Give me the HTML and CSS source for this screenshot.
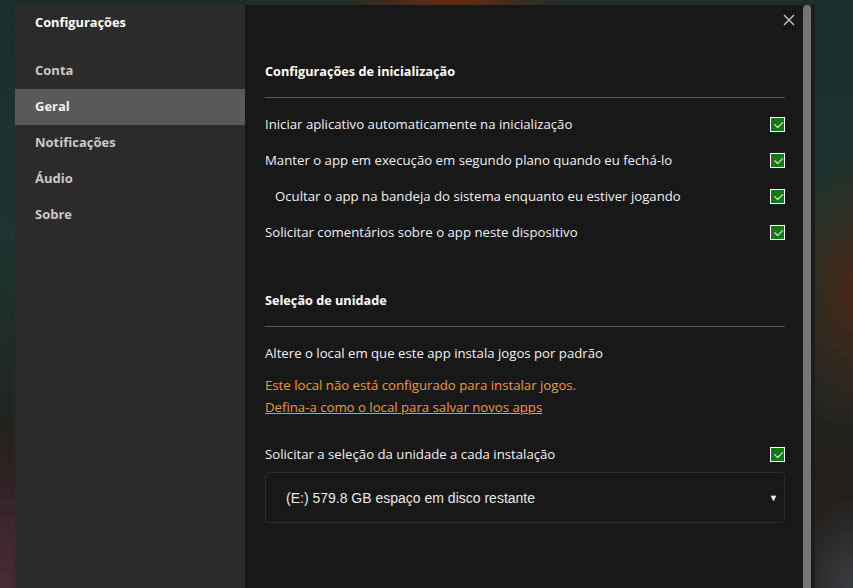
FILE: index.html
```html
<!DOCTYPE html>
<html lang="pt-BR">
<head>
  <meta charset="UTF-8">
  <title>Configurações</title>
  <link rel="stylesheet" href="styles.css">
</head>
<body>
  <div class="dialog">
    <aside class="sidebar">
      <h1 class="sidebar-title">Configurações</h1>
      <nav class="nav">
        <a class="nav-item">Conta</a>
        <a class="nav-item active">Geral</a>
        <a class="nav-item">Notificações</a>
        <a class="nav-item">Áudio</a>
        <a class="nav-item">Sobre</a>
      </nav>
    </aside>

    <main class="main">
      <button class="close" aria-label="Fechar">
        <svg width="12" height="12" viewBox="0 0 12 12"><path d="M1 1L11 11M11 1L1 11" stroke="#c8c8c8" stroke-width="1.4" fill="none"/></svg>
      </button>

      <div class="content">
        <section class="section">
          <h2 class="section-title">Configurações de inicialização</h2>
          <hr class="divider">
          <div class="row">
            <span>Iniciar aplicativo automaticamente na inicialização</span>
            <span class="check"></span>
          </div>
          <div class="row">
            <span>Manter o app em execução em segundo plano quando eu fechá-lo</span>
            <span class="check"></span>
          </div>
          <div class="row sub">
            <span>Ocultar o app na bandeja do sistema enquanto eu estiver jogando</span>
            <span class="check"></span>
          </div>
          <div class="row">
            <span>Solicitar comentários sobre o app neste dispositivo</span>
            <span class="check"></span>
          </div>
        </section>

        <section class="section second">
          <h2 class="section-title">Seleção de unidade</h2>
          <hr class="divider">
          <div class="row">
            <span>Altere o local em que este app instala jogos por padrão</span>
          </div>
          <p class="warning">Este local não está configurado para instalar jogos.<br>
            <a class="warning-link">Defina-a como o local para salvar novos apps</a></p>
          <div class="row">
            <span>Solicitar a seleção da unidade a cada instalação</span>
            <span class="check"></span>
          </div>
          <div class="select">
            <span>(E:) 579.8 GB espaço em disco restante</span>
            <span class="caret">▼</span>
          </div>
        </section>
      </div>

      <div class="scrollbar"><div class="thumb"></div></div>
    </main>
  </div>
</body>
</html>
```

FILE: styles.css
```css
html, body {
  height: 100%;
}
body {
  margin: 0;
  overflow: hidden;
  font-family: "Open Sans", "Noto Sans", sans-serif;
  background-color: #1b302d;
  background-image:
    radial-gradient(ellipse 120px 30px at 450px 0px, #6a2a0f, transparent),
    radial-gradient(ellipse 80px 140px at 860px 290px, #4a2614, transparent),
    radial-gradient(ellipse 80px 160px at 0px 588px, #4c2a36, transparent),
    radial-gradient(ellipse 60px 90px at 853px 588px, #3a3d40, transparent),
    linear-gradient(180deg, #1a2e2b 0%, #1c3530 40%, #241f1c 80%, #222 100%);
}
.dialog {
  display: flex;
  width: 800px;
  height: 583px;
  margin: 5px 0 0 15px;
}

/* sidebar */
.sidebar {
  width: 230px;
  background: #2b2b2b;
  flex-shrink: 0;
}
.sidebar-title {
  margin: 7px 0 0;
  padding-left: 20px;
  font-size: 12.8px;
  line-height: 20px;
  font-weight: bold;
  color: #fff;
}
.nav {
  margin-top: 21px;
}
.nav-item {
  display: block;
  height: 36px;
  line-height: 34px;
  padding-left: 20px;
  font-size: 13px;
  font-weight: bold;
  color: #c9c9c9;
}
.nav-item.active {
  background: #595959;
  color: #f2f2f2;
}

/* main panel */
.main {
  position: relative;
  flex: 1;
  display: flex;
  background: #181818;
}
.close {
  position: absolute;
  top: 9px;
  right: 20px;
  width: 12px;
  height: 12px;
  padding: 0;
  border: none;
  background: none;
  cursor: pointer;
}
.content {
  flex: 1;
  padding: 56px 18px 0 20px;
  color: #f0f0f0;
  font-size: 13.2px;
}
.section-title {
  margin: 0;
  font-size: 12.7px;
  line-height: 20px;
  font-weight: bold;
  color: #fff;
}
.divider {
  margin: 16px 0 8px;
  border: none;
  border-top: 1px solid #5c5c5c;
}
.second {
  margin-top: 40px;
}
.row {
  display: flex;
  align-items: center;
  justify-content: space-between;
  height: 36px;
}
.row.sub {
  padding-left: 10px;
}
.check {
  width: 13px;
  height: 13px;
  border: 1.5px solid #fff;
  background: #107c10;
  position: relative;
}
.check::after {
  content: "";
  position: absolute;
  left: 3px;
  top: 1px;
  width: 7px;
  height: 4px;
  border-left: 1.5px solid #fff;
  border-bottom: 1.5px solid #fff;
  transform: rotate(-45deg) translate(-1px, 2px);
}
.warning {
  margin: 3px 0 18px;
  line-height: 22px;
  color: #ec9b2e;
}
.warning-link {
  text-decoration: underline;
  cursor: pointer;
}
.select {
  display: flex;
  align-items: center;
  justify-content: space-between;
  height: 49px;
  padding: 0 6px 0 20px;
  border: 1px solid #2e2e2e;
  border-radius: 4px;
  font-family: "Liberation Sans", Arial, sans-serif;
  font-size: 14px;
  color: #e8e8e8;
}
.caret {
  font-size: 9px;
  color: #fff;
}
.scrollbar {
  width: 12px;
  background: #1c1c1c;
}
.thumb {
  width: 8px;
  height: 100%;
  background: #757575;
  border-radius: 4px 4px 0 0;
}
```
